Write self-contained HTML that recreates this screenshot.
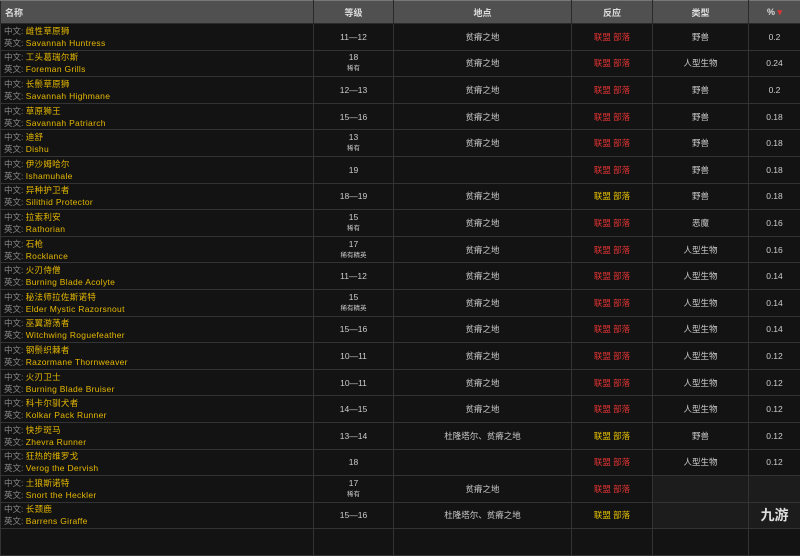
<!DOCTYPE html><html><head><meta charset="utf-8"><style>
body{margin:0;background:#111;width:800px;height:532px;overflow:hidden;font-family:"Liberation Sans","Noto Sans CJK SC",sans-serif}
table{border-collapse:collapse;width:800px;table-layout:fixed}
th{background:#505050;color:#ddd;font-size:9px;height:20px;border:1px solid #2a2a2a;border-top:1px solid #777;font-weight:bold}
th:first-child{text-align:left;padding-left:4px}
td{background:#131313;border:1px solid #333;height:25.6px;padding:0;font-size:8.5px;color:#ccc;text-align:center;line-height:10px}
td.n{text-align:left;padding-left:3px;color:#888;font-size:8.5px;line-height:12px}
td.n b{color:#e6b800;font-weight:normal;letter-spacing:0.3px}
.r{color:#e03333}.y{color:#e6c200}
small{font-size:6.5px}
</style></head><body><table>
<colgroup><col style="width:313px"><col style="width:80px"><col style="width:178px"><col style="width:81px"><col style="width:96px"><col style="width:52px"></colgroup>
<tr><th>名称</th><th>等级</th><th>地点</th><th>反应</th><th>类型</th><th>% <span style="color:#e03333">▾</span></th></tr>
<tr><td class="n">中文: <b>雌性草原狮</b><br>英文: <b>Savannah Huntress</b></td><td>11—12</td><td>贫瘠之地</td><td class="r">联盟 部落</td><td>野兽</td><td>0.2</td></tr>
<tr><td class="n">中文: <b>工头葛瑞尔斯</b><br>英文: <b>Foreman Grills</b></td><td>18<br><small>稀有</small></td><td>贫瘠之地</td><td class="r">联盟 部落</td><td>人型生物</td><td>0.24</td></tr>
<tr><td class="n">中文: <b>长鬃草原狮</b><br>英文: <b>Savannah Highmane</b></td><td>12—13</td><td>贫瘠之地</td><td class="r">联盟 部落</td><td>野兽</td><td>0.2</td></tr>
<tr><td class="n">中文: <b>草原狮王</b><br>英文: <b>Savannah Patriarch</b></td><td>15—16</td><td>贫瘠之地</td><td class="r">联盟 部落</td><td>野兽</td><td>0.18</td></tr>
<tr><td class="n">中文: <b>迪舒</b><br>英文: <b>Dishu</b></td><td>13<br><small>稀有</small></td><td>贫瘠之地</td><td class="r">联盟 部落</td><td>野兽</td><td>0.18</td></tr>
<tr><td class="n">中文: <b>伊沙姆哈尔</b><br>英文: <b>Ishamuhale</b></td><td>19</td><td></td><td class="r">联盟 部落</td><td>野兽</td><td>0.18</td></tr>
<tr><td class="n">中文: <b>异种护卫者</b><br>英文: <b>Silithid Protector</b></td><td>18—19</td><td>贫瘠之地</td><td class="y">联盟 部落</td><td>野兽</td><td>0.18</td></tr>
<tr><td class="n">中文: <b>拉索利安</b><br>英文: <b>Rathorian</b></td><td>15<br><small>稀有</small></td><td>贫瘠之地</td><td class="r">联盟 部落</td><td>恶魔</td><td>0.16</td></tr>
<tr><td class="n">中文: <b>石枪</b><br>英文: <b>Rocklance</b></td><td>17<br><small>稀有精英</small></td><td>贫瘠之地</td><td class="r">联盟 部落</td><td>人型生物</td><td>0.16</td></tr>
<tr><td class="n">中文: <b>火刃侍僧</b><br>英文: <b>Burning Blade Acolyte</b></td><td>11—12</td><td>贫瘠之地</td><td class="r">联盟 部落</td><td>人型生物</td><td>0.14</td></tr>
<tr><td class="n">中文: <b>秘法师拉佐斯诺特</b><br>英文: <b>Elder Mystic Razorsnout</b></td><td>15<br><small>稀有精英</small></td><td>贫瘠之地</td><td class="r">联盟 部落</td><td>人型生物</td><td>0.14</td></tr>
<tr><td class="n">中文: <b>巫翼游荡者</b><br>英文: <b>Witchwing Roguefeather</b></td><td>15—16</td><td>贫瘠之地</td><td class="r">联盟 部落</td><td>人型生物</td><td>0.14</td></tr>
<tr><td class="n">中文: <b>钢鬃织棘者</b><br>英文: <b>Razormane Thornweaver</b></td><td>10—11</td><td>贫瘠之地</td><td class="r">联盟 部落</td><td>人型生物</td><td>0.12</td></tr>
<tr><td class="n">中文: <b>火刃卫士</b><br>英文: <b>Burning Blade Bruiser</b></td><td>10—11</td><td>贫瘠之地</td><td class="r">联盟 部落</td><td>人型生物</td><td>0.12</td></tr>
<tr><td class="n">中文: <b>科卡尔驯犬者</b><br>英文: <b>Kolkar Pack Runner</b></td><td>14—15</td><td>贫瘠之地</td><td class="r">联盟 部落</td><td>人型生物</td><td>0.12</td></tr>
<tr><td class="n">中文: <b>快步斑马</b><br>英文: <b>Zhevra Runner</b></td><td>13—14</td><td>杜隆塔尔、贫瘠之地</td><td class="y">联盟 部落</td><td>野兽</td><td>0.12</td></tr>
<tr><td class="n">中文: <b>狂热的维罗戈</b><br>英文: <b>Verog the Dervish</b></td><td>18</td><td></td><td class="r">联盟 部落</td><td>人型生物</td><td>0.12</td></tr>
<tr><td class="n">中文: <b>土狼斯诺特</b><br>英文: <b>Snort the Heckler</b></td><td>17<br><small>稀有</small></td><td>贫瘠之地</td><td class="r">联盟 部落</td><td style="background:#1c1c1c"></td><td style="background:#1c1c1c"></td></tr>
<tr><td class="n">中文: <b>长颈鹿</b><br>英文: <b>Barrens Giraffe</b></td><td>15—16</td><td>杜隆塔尔、贫瘠之地</td><td class="y">联盟 部落</td><td style="background:#1c1c1c"></td><td style="color:#ddd;font-size:14px;font-weight:bold;background:#1c1c1c">九游</td></tr>
<tr><td class="n">&nbsp;</td><td></td><td></td><td></td><td></td><td></td></tr>
</table></body></html>
